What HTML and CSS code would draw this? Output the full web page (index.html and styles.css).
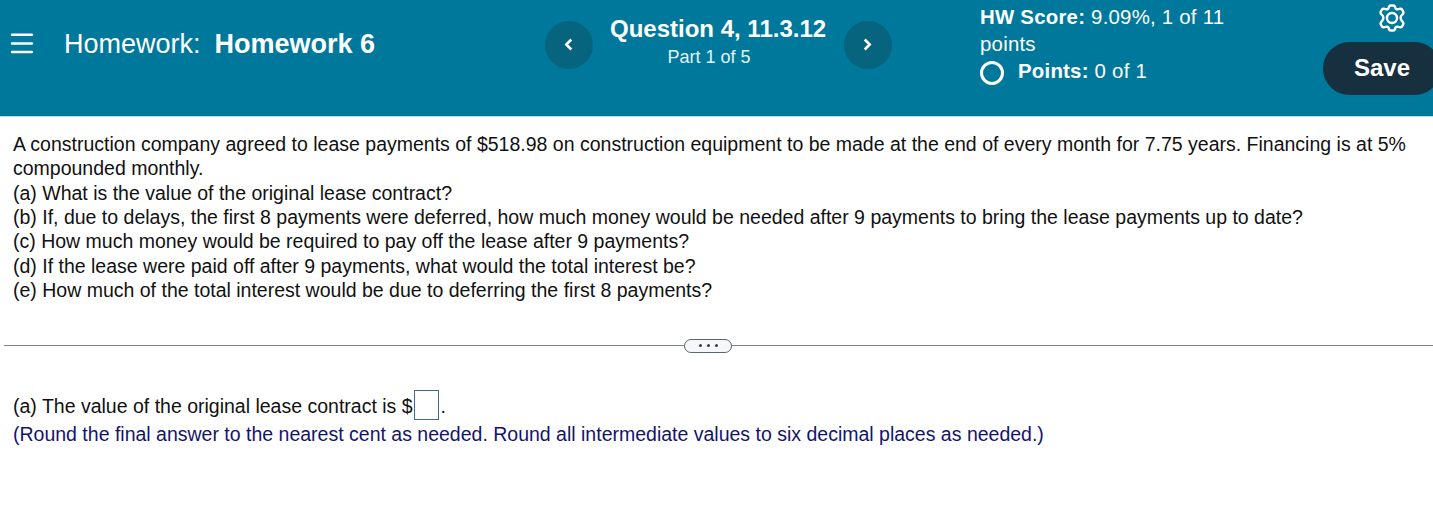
FILE: index.html
```html
<!DOCTYPE html>
<html lang="en">
	<head>
		<meta charset="UTF-8">
		<title>Homework 6</title>
		<link rel="stylesheet" href="styles.css">
	</head>
	<body>
		<header class="header">
			<div class="title">
				<svg class="menu" width="24" height="22" viewBox="0 0 24 22">
					<path d="M2 1.7H22M2 10.5H22M2 19H22" stroke="#fff" stroke-width="2.4" stroke-linecap="round"/>
				</svg>
				<span class="label">Homework:</span>
				<h1>Homework 6</h1>
			</div>
			<div class="nav">
				<a href="javascript:;" class="arrow">
					<svg width="48" height="48" viewBox="0 0 48 48"><path d="M26.3 18.5L21.3 23.5L26.3 28.5"/></svg>
				</a>
				<div class="question">
					<h2>Question 4, 11.3.12</h2>
					<p>Part 1 of 5</p>
				</div>
				<a href="javascript:;" class="arrow">
					<svg width="48" height="48" viewBox="0 0 48 48"><path d="M20.7 18.5L25.7 23.5L20.7 28.5"/></svg>
				</a>
			</div>
			<div class="score">
				<p><b>HW Score:</b> 9.09%, 1 of 11<br>points</p>
				<p class="points"><i class="ring"></i><span><b>Points:</b> 0 of 1</span></p>
			</div>
			<div class="tools">
				<svg class="gear" width="28" height="28" viewBox="0 0 28 28">
					<path d="M10.7 3.8Q11.2 1.5 12.8 1.5H15.2Q16.8 1.5 17.3 3.8Q17.8 5.8 20.3 5.1Q23.2 4.2 24 5.5L25.2 7.6Q26 9 24.2 10.7Q22.6 12.1 22.6 14Q22.6 15.9 24.2 17.3Q26 19 25.2 20.4L24 22.5Q23.2 23.8 20.3 22.9Q17.8 22.2 17.3 24.2Q16.8 26.5 15.2 26.5H12.8Q11.2 26.5 10.7 24.2Q10.2 22.2 7.7 22.9Q4.8 23.8 4 22.5L2.8 20.4Q2 19 3.8 17.3Q5.4 15.9 5.4 14Q5.4 12.1 3.8 10.7Q2 9 2.8 7.6L4 5.5Q4.8 4.2 7.7 5.1Q10.2 5.8 10.7 3.8Z"/>
					<circle cx="14" cy="14" r="5"/>
				</svg>
				<a href="javascript:;" class="save">Save</a>
			</div>
		</header>
		<div class="problem">
			<p>A construction company agreed to lease payments of $518.98 on construction equipment to be made at the end of every month for 7.75 years. Financing is at 5%<br>compounded monthly.</p>
			<p>(a) What is the value of the original lease contract?</p>
			<p>(b) If, due to delays, the first 8 payments were deferred, how much money would be needed after 9 payments to bring the lease payments up to date?</p>
			<p>(c) How much money would be required to pay off the lease after 9 payments?</p>
			<p>(d) If the lease were paid off after 9 payments, what would the total interest be?</p>
			<p>(e) How much of the total interest would be due to deferring the first 8 payments?</p>
		</div>
		<div class="divider">
			<div class="handle"><i></i><i></i><i></i></div>
		</div>
		<div class="answer">
			<p class="fill"><span>(a) The value of the original lease contract is $</span><input type="text" class="box" aria-label="answer"><span>.</span></p>
			<p class="hint">(Round the final answer to the nearest cent as needed. Round all intermediate values to six decimal places as needed.)</p>
		</div>
	</body>
</html>
```
FILE: styles.css
```css
*{
	margin:0px;
	padding:0px;
	box-sizing: border-box;
}
body{
	background: #fff;
	color:#111;
	font-family: "Liberation Sans", Arial, sans-serif;
	font-size: 19.5px;
	overflow: hidden;
}
a{
	text-decoration: none;
}
.header{
	height: 117px;
	background: #00789b;
	border-bottom: 1px solid #b5dbe8;
	color:#fff;
	display: grid;
	grid-template-columns: 545px 435px 343px 118px;
	align-items: start;
}
.title{
	display: flex;
	align-items: center;
	padding:28px 0 0 10px;
	font-size: 27px;
	line-height: 30px;
}
.title .label{
	margin:0 14px 0 30px;
	padding-top: 1px;
}
.title h1{
	padding-top: 1px;
	font-size: 27px;
}
.nav{
	display: flex;
	padding-top: 15px;
}
.arrow{
	width: 48px;
	height: 48px;
	margin-top: 6px;
	border-radius:50%;
	background: #07647f;
}
.arrow svg{
	display: block;
	fill:none;
	stroke:#fff;
	stroke-width: 2.6;
}
.question{
	width: 251px;
	padding-left: 17px;
}
.question h2{
	font-size: 24px;
	line-height: 28px;
	white-space: nowrap;
}
.question p{
	width: 198px;
	font-size: 18px;
	line-height: 28px;
	text-align: center;
	color:#e2f3f8;
}
.score{
	padding-top: 4px;
	font-size: 20.4px;
	line-height: 27px;
	letter-spacing: 0.23px;
}
.points{
	display: flex;
}
.ring{
	width: 24px;
	height: 24px;
	margin:3px 14px 0 0;
	border:3px solid #fff;
	border-radius:50%;
}
.gear{
	display: block;
	margin:4px 0 10px 55px;
	fill:none;
	stroke:#fff;
	stroke-width: 2.4;
}
.save{
	display: block;
	width: 118px;
	height: 53px;
	border-radius:27px;
	background: #16303f;
	color:#fff;
	font-size: 24px;
	font-weight: bold;
	line-height: 52px;
	text-align: center;
}
.problem{
	height: 185.8px;
	padding:15px 0 0 13px;
	line-height: 24.35px;
	white-space: nowrap;
}
.divider{
	display: flex;
	align-items: center;
	margin:36px 0 0 4px;
}
.divider:before,.divider:after{
	content:"";
	height: 1px;
	background: #7f8488;
	width: 680px;
}
.divider:after{
	flex:1;
}
.handle{
	display: flex;
	justify-content: center;
	align-items: center;
	gap:5px;
	width: 48px;
	height: 14px;
	border:1px solid #5a6670;
	border-radius:7px;
	background: #f5f7f9;
}
.handle i{
	width: 3px;
	height: 3px;
	border-radius:50%;
	background: #333c48;
}
.answer{
	padding:37px 0 0 13px;
	white-space: nowrap;
}
.fill{
	display: flex;
	align-items: center;
	height: 31px;
}
.fill span{
	padding-top: 2px;
}
.box{
	width: 25px;
	height: 30px;
	margin:0 2px 0 1px;
	border:1px solid #3d68a8;
	background: #fff;
}
.hint{
	color:#14146e;
	line-height: 26px;
}
```
